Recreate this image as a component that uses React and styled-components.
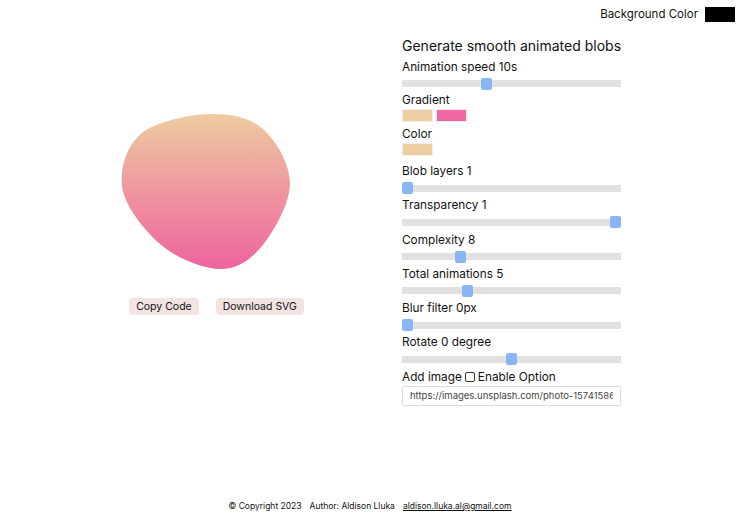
import React from "react";
import styled, { createGlobalStyle } from "styled-components";

const Global = createGlobalStyle`
  html, body { margin: 0; padding: 0; background: #fff; }
  body { font-family: Inter, "Noto Sans", "Liberation Sans", sans-serif; color: #111; }
`;

const Page = styled.div`
  width: 740px;
  height: 519px;
  display: flex;
  flex-direction: column;
  overflow: hidden;
`;

const TopBar = styled.div`
  height: 30px;
  display: flex;
  justify-content: flex-end;
  align-items: flex-start;
  padding: 7px 5px 0 0;
  box-sizing: border-box;
  gap: 7px;
`;

const TopLabel = styled.span`
  font-size: 11.5px;
  line-height: 15px;
`;

const BgSwatch = styled.div`
  width: 30px;
  height: 15px;
  background: #000;
`;

const Main = styled.div`
  display: grid;
  grid-template-columns: 402px 219px;
  flex: 1;
`;

const Preview = styled.div`
  display: flex;
  flex-direction: column;
  align-items: center;
  padding: 71px 0 0 17px;
`;

const BlobSvg = styled.svg`
  width: 200px;
  height: 180px;
  display: block;
`;

const ButtonRow = styled.div`
  display: flex;
  gap: 17px;
  margin-top: 17px;
  margin-left: 14px;
`;

const Button = styled.button`
  border: none;
  background: #f3e4e3;
  border-radius: 4px;
  height: 17px;
  padding: 0 7px;
  font-family: inherit;
  font-size: 10.5px;
  color: #111;
  cursor: pointer;
`;

const Panel = styled.div`
  display: flex;
  flex-direction: column;
  padding-top: 5px;
`;

const Title = styled.h1`
  margin: 0 0 1px;
  font-size: 14px;
  font-weight: 400;
  line-height: 22px;
  white-space: nowrap;
`;

const Label = styled.div`
  font-size: 11.8px;
  line-height: 18px;
  height: 18px;
  white-space: nowrap;
  display: flex;
  align-items: center;
  gap: 3px;
`;

const SliderWrap = styled.div`
  position: relative;
  height: ${(p) => p.$h || 16.25}px;
  display: flex;
  align-items: center;
`;

const Track = styled.div`
  width: 100%;
  height: 7px;
  background: #e1e1e1;
`;

const Thumb = styled.div`
  position: absolute;
  top: 50%;
  width: 11px;
  height: 12px;
  margin-top: -6px;
  border-radius: 2px;
  background: #89b5f7;
`;

const SwatchRow = styled.div`
  display: flex;
  gap: 3px;
  height: 13px;
  margin-bottom: ${(p) => p.$mb}px;
`;

const Swatch = styled.div`
  width: 31px;
  height: 13px;
  box-sizing: border-box;
  border: 1px solid #f2eeee;
  background: ${(p) => p.$c};
`;

const Checkbox = styled.span`
  width: 10px;
  height: 10px;
  border: 1px solid #333;
  border-radius: 2px;
  box-sizing: border-box;
  display: inline-block;
`;

const UrlInput = styled.input`
  height: 20px;
  width: 100%;
  margin: 0;
  box-sizing: border-box;
  border: 1px solid #dcdcdc;
  border-radius: 2px;
  padding: 0 7px;
  font-family: inherit;
  font-size: 9.5px;
  color: #444;
  background: #fff;
  outline: none;
`;

const Footer = styled.footer`
  height: 26px;
  box-sizing: border-box;
  padding-top: 6px;
  display: flex;
  justify-content: center;
  align-items: flex-start;
  gap: 8px;
  font-size: 8.5px;
  line-height: 14px;
  color: #111;
`;

const Mail = styled.a`
  color: #111;
  text-decoration: underline;
`;

function Slider({ frac, h }) {
  return (
    <SliderWrap $h={h}>
      <Track />
      <Thumb style={{ left: `calc(${frac} * (100% - 11px))` }} />
    </SliderWrap>
  );
}

const sliders = [
  ["Blob layers 1", 0],
  ["Transparency 1", 1],
  ["Complexity 8", 0.255],
  ["Total animations 5", 0.29],
  ["Blur filter 0px", 0],
  ["Rotate 0 degree", 0.5],
];

export default function App() {
  return (
    <>
      <Global />
      <Page>
        <TopBar>
          <TopLabel>Background Color</TopLabel>
          <BgSwatch />
        </TopBar>
        <Main>
          <Preview>
            <BlobSvg viewBox="0 0 200 180">
              <defs>
                <linearGradient id="bg" x1="0" y1="0" x2="0" y2="1">
                  <stop offset="0%" stopColor="#edcba0" />
                  <stop offset="100%" stopColor="#ef639f" />
                </linearGradient>
              </defs>
              <path
                fill="url(#bg)"
                d="M100,13 C120.2,12.3 139.7,16.3 153,28 C166.3,39.7 180.2,63.5 180,83 C179.8,102.5 163.7,130.8 152,145 C140.3,159.2 127,168.3 110,168 C93,167.7 66.2,157.2 50,143 C33.8,128.8 14,104 12,85 C10,64.5 17.5,43.7 32,32 C46.5,20.3 79.8,13.7 100,13 Z"
              />
            </BlobSvg>
            <ButtonRow>
              <Button>Copy Code</Button>
              <Button>Download SVG</Button>
            </ButtonRow>
          </Preview>
          <Panel>
            <Title>Generate smooth animated blobs</Title>
            <Label>Animation speed 10s</Label>
            <Slider frac={0.378} h={15} />
            <Label>Gradient</Label>
            <SwatchRow $mb={3}>
              <Swatch $c="#edcda2" />
              <Swatch $c="#ef66a0" />
            </SwatchRow>
            <Label>Color</Label>
            <SwatchRow $mb={6}>
              <Swatch $c="#edcda2" />
            </SwatchRow>
            {sliders.map(([l, f]) => (
              <React.Fragment key={l}>
                <Label>{l}</Label>
                <Slider frac={f} />
              </React.Fragment>
            ))}
            <Label>
              Add image <Checkbox /> Enable Option
            </Label>
            <UrlInput readOnly value="https://images.unsplash.com/photo-1574158622682-e40e69881006" />
          </Panel>
        </Main>
        <Footer>
          <span>© Copyright 2023</span>
          <span>Author: Aldison Lluka</span>
          <Mail href="#">aldison.lluka.al@gmail.com</Mail>
        </Footer>
      </Page>
    </>
  );
}
